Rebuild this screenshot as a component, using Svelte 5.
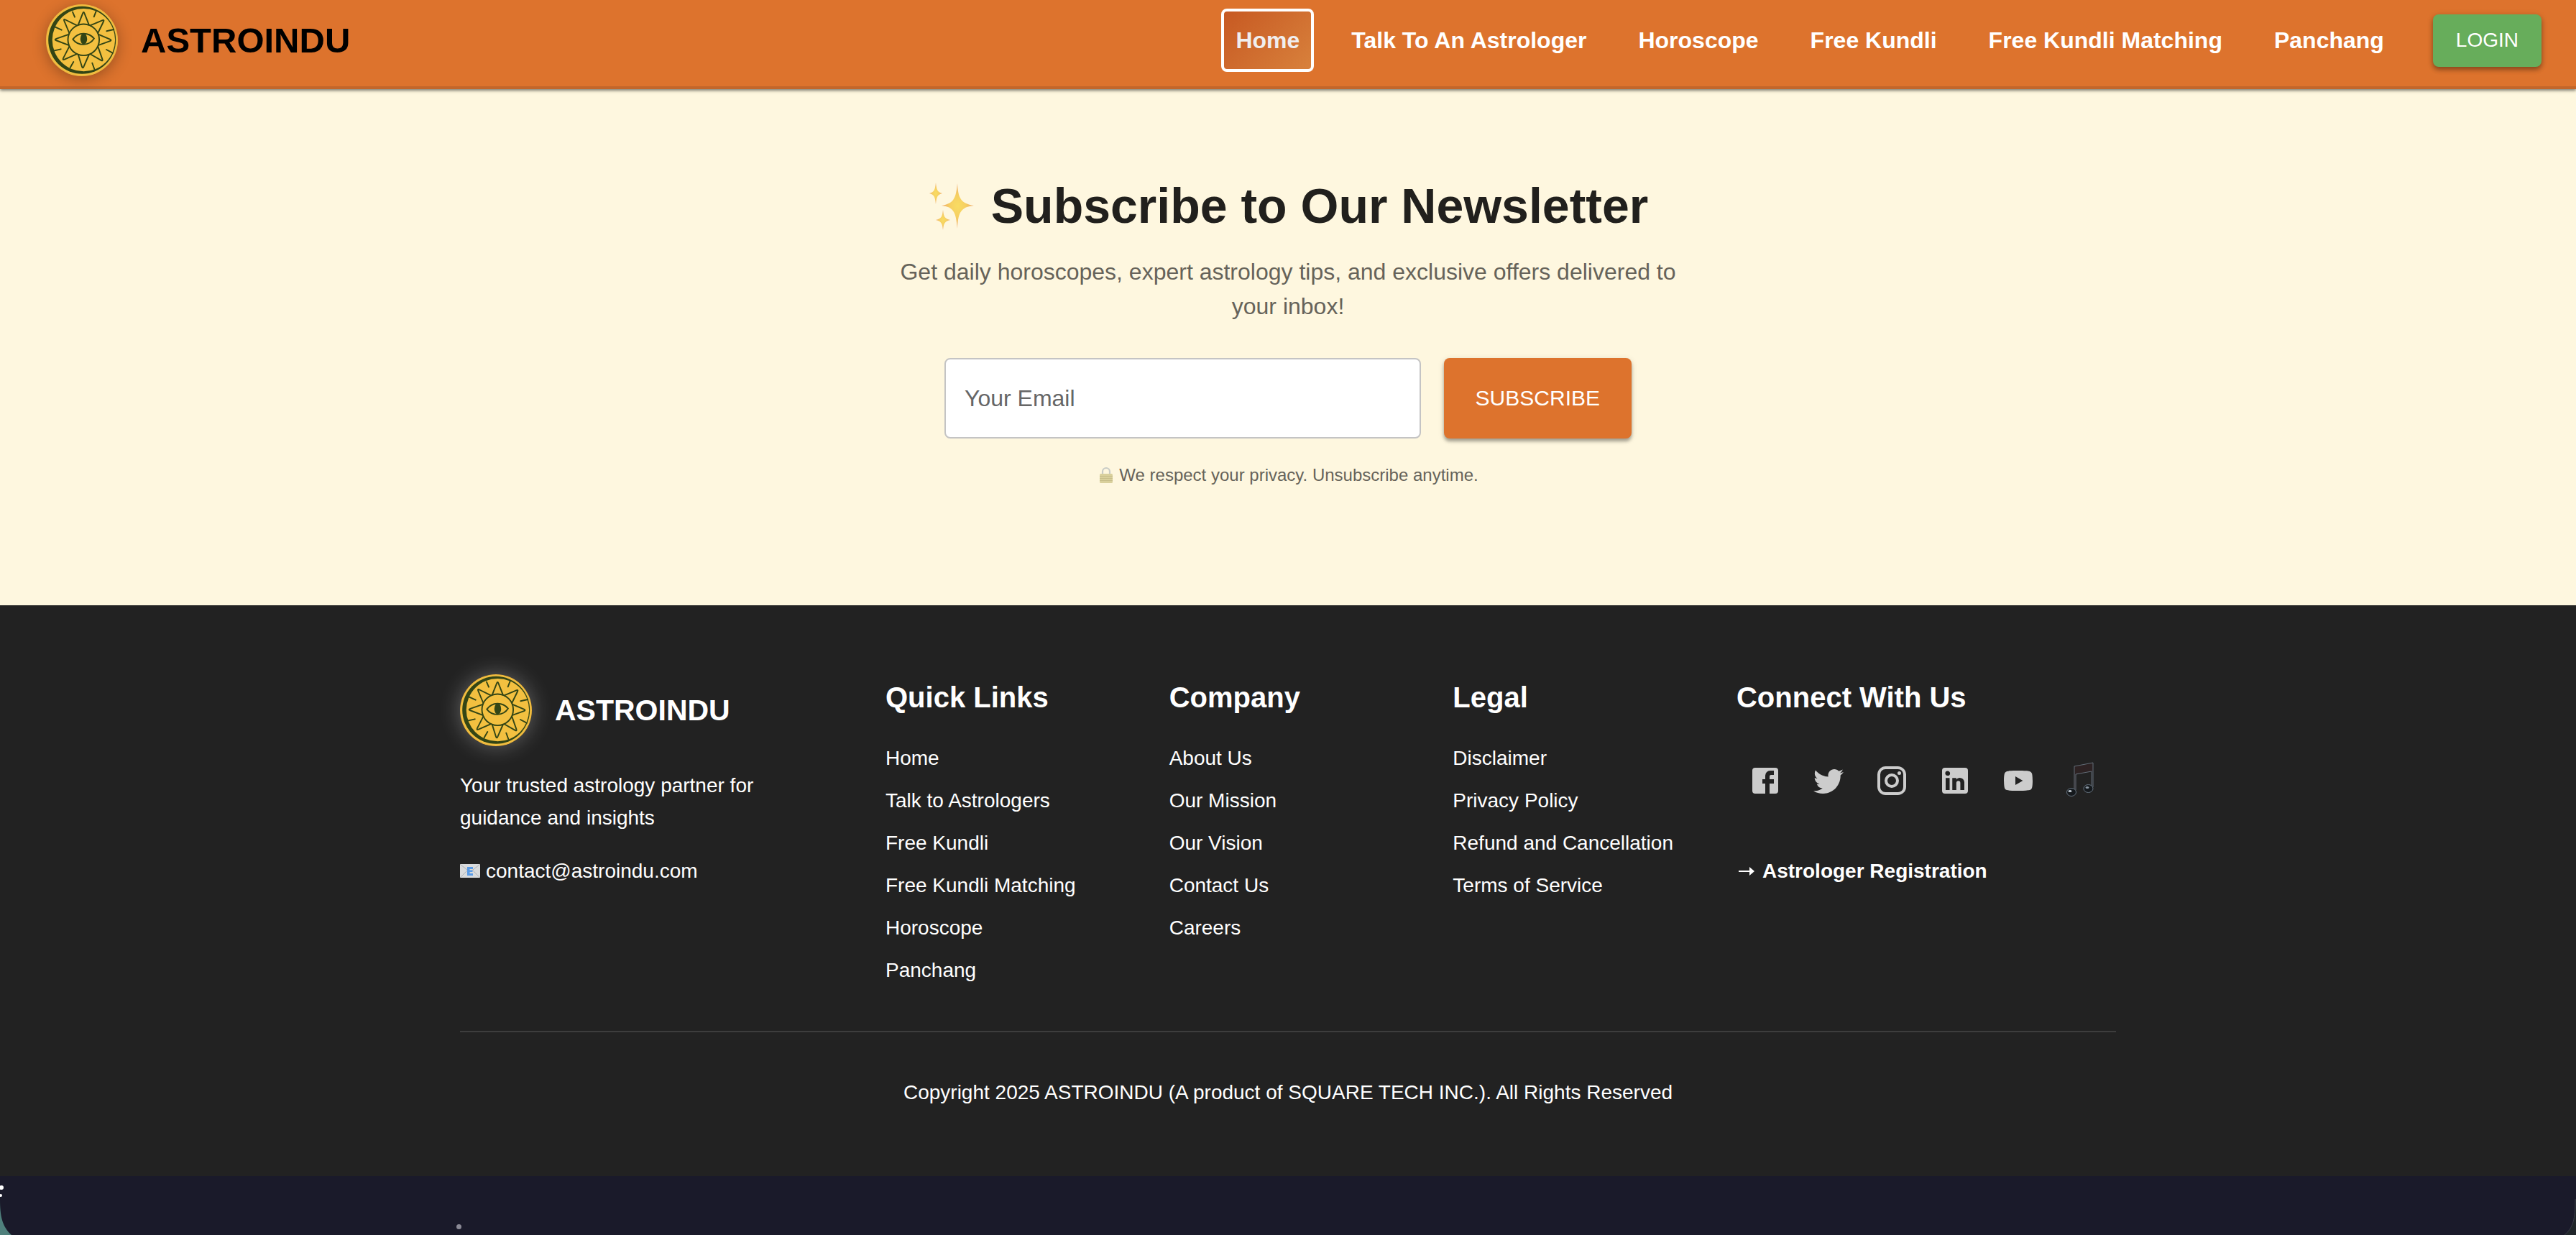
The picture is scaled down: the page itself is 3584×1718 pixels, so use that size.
<script lang="ts">
  interface Point {
    x: number;
    y: number;
  }

  let email = $state('');

  const navItems = ['Home', 'Talk To An Astrologer', 'Horoscope', 'Free Kundli', 'Free Kundli Matching', 'Panchang'];
  let active = $state('Home');

  const linkGroups = [
    {
      title: 'Quick Links',
      links: ['Home', 'Talk to Astrologers', 'Free Kundli', 'Free Kundli Matching', 'Horoscope', 'Panchang']
    },
    { title: 'Company', links: ['About Us', 'Our Mission', 'Our Vision', 'Contact Us', 'Careers'] },
    { title: 'Legal', links: ['Disclaimer', 'Privacy Policy', 'Refund and Cancellation', 'Terms of Service'] }
  ];

  const socials = [
    {
      name: 'Facebook',
      path: 'M5 3h14a2 2 0 0 1 2 2v14a2 2 0 0 1-2 2H5a2 2 0 0 1-2-2V5a2 2 0 0 1 2-2m13 2h-2.5A3.5 3.5 0 0 0 12 8.5V11h-2v3h2v7h3v-7h3v-3h-3V9a1 1 0 0 1 1-1h2V5z'
    },
    {
      name: 'Twitter',
      path: 'M22.46 6c-.77.35-1.6.58-2.46.69.88-.53 1.56-1.37 1.88-2.38-.83.5-1.75.85-2.72 1.05C18.37 4.5 17.26 4 16 4c-2.35 0-4.27 1.92-4.27 4.29 0 .34.04.67.11.98C8.28 9.09 5.11 7.38 3 4.79c-.37.63-.58 1.37-.58 2.15 0 1.49.75 2.81 1.91 3.56-.71 0-1.37-.2-1.95-.5v.03c0 2.08 1.48 3.82 3.44 4.21a4.22 4.22 0 0 1-1.93.07 4.28 4.28 0 0 0 4 2.98 8.521 8.521 0 0 1-5.33 1.84c-.34 0-.68-.02-1.02-.06C3.44 20.29 5.7 21 8.12 21 16 21 20.33 14.46 20.33 8.79c0-.19 0-.37-.01-.56.84-.6 1.56-1.36 2.14-2.23z'
    },
    {
      name: 'Instagram',
      path: 'M7.8 2h8.4C19.4 2 22 4.6 22 7.8v8.4a5.8 5.8 0 0 1-5.8 5.8H7.8C4.6 22 2 19.4 2 16.2V7.8A5.8 5.8 0 0 1 7.8 2m-.2 2A3.6 3.6 0 0 0 4 7.6v8.8C4 18.39 5.61 20 7.6 20h8.8a3.6 3.6 0 0 0 3.6-3.6V7.6C20 5.61 18.39 4 16.4 4H7.6m9.65 1.5a1.25 1.25 0 0 1 1.25 1.25A1.25 1.25 0 0 1 17.25 8 1.25 1.25 0 0 1 16 6.75a1.25 1.25 0 0 1 1.25-1.25M12 7a5 5 0 0 1 5 5 5 5 0 0 1-5 5 5 5 0 0 1-5-5 5 5 0 0 1 5-5m0 2a3 3 0 0 0-3 3 3 3 0 0 0 3 3 3 3 0 0 0 3-3 3 3 0 0 0-3-3z'
    },
    {
      name: 'LinkedIn',
      path: 'M19 3a2 2 0 0 1 2 2v14a2 2 0 0 1-2 2H5a2 2 0 0 1-2-2V5a2 2 0 0 1 2-2h14m-.5 15.5v-5.3a3.26 3.26 0 0 0-3.26-3.26c-.85 0-1.84.52-2.32 1.3v-1.11h-2.79v8.37h2.79v-4.93c0-.77.62-1.4 1.39-1.4a1.4 1.4 0 0 1 1.4 1.4v4.93h2.79M6.88 8.56a1.68 1.68 0 0 0 1.68-1.68c0-.93-.75-1.69-1.68-1.69a1.69 1.69 0 0 0-1.69 1.69c0 .93.76 1.68 1.69 1.68m1.39 9.94v-8.37H5.5v8.37h2.77z'
    },
    {
      name: 'YouTube',
      path: 'M10 15l5.19-3L10 9v6m11.56-7.83c.13.47.22 1.1.28 1.9.07.8.1 1.49.1 2.09L22 12c0 2.19-.16 3.8-.44 4.83-.25.9-.83 1.48-1.73 1.73-.47.13-1.33.22-2.65.28-1.3.07-2.49.1-3.59.1L12 19c-4.19 0-6.8-.16-7.83-.44-.9-.25-1.48-.83-1.73-1.73-.13-.47-.22-1.1-.28-1.9-.07-.8-.1-1.49-.1-2.09L2 12c0-2.19.16-3.8.44-4.83.25-.9.83-1.48 1.73-1.73.47-.13 1.33-.22 2.65-.28 1.3-.07 2.49-.1 3.59-.1L12 5c4.19 0 6.8.16 7.83.44.9.25 1.48.83 1.73 1.73z'
    }
  ];

  // sun rays: two points on the inner circle and the tip
  const rays: [Point, Point, Point][] = [
    [{ x: 44.8, y: 28.6 }, { x: 52.3, y: 9.5 }, { x: 59.8, y: 28.6 }],
    [{ x: 61.6, y: 29.4 }, { x: 81.5, y: 21 }, { x: 72.2, y: 40 }],
    [{ x: 73, y: 41.8 }, { x: 92, y: 50 }, { x: 73, y: 56.8 }],
    [{ x: 72.2, y: 58.6 }, { x: 79.5, y: 79.5 }, { x: 61.6, y: 69.2 }],
    [{ x: 59.8, y: 70 }, { x: 51, y: 90 }, { x: 44.8, y: 70 }],
    [{ x: 43, y: 69.2 }, { x: 22.5, y: 78 }, { x: 32.4, y: 58.6 }],
    [{ x: 31.6, y: 56.8 }, { x: 11, y: 49 }, { x: 31.6, y: 41.8 }],
    [{ x: 32.4, y: 40 }, { x: 24, y: 20 }, { x: 43, y: 29.4 }]
  ];

  function mix(a: Point, b: Point, t: number) {
    return `${a.x + (b.x - a.x) * t} ${a.y + (b.y - a.y) * t}`;
  }

  // rounded tip
  function rayPath([a, tip, b]: [Point, Point, Point]) {
    return `M${a.x} ${a.y}L${mix(a, tip, 0.84)}Q${tip.x} ${tip.y} ${mix(b, tip, 0.84)}L${b.x} ${b.y}`;
  }
</script>

{#snippet sunLogo()}
  <svg viewBox="0 0 100 100" aria-hidden="true">
    <circle cx="50" cy="50" r="50" fill="#edb83f" />
    <circle cx="50" cy="50" r="48.5" fill="#f3c040" />
    <circle cx="50.2" cy="49.8" r="47" fill="#334515" />
    <circle cx="52.4" cy="49.6" r="43.7" fill="#f3c040" />
    <g fill="none" stroke="#334515" stroke-width="1.9" stroke-linecap="round" stroke-linejoin="round">
      {#each rays as ray}
        <path d={rayPath(ray)} />
      {/each}
      <circle cx="52.3" cy="49.3" r="21.8" />
      <path d="M37.3 48.6C45 38.3 59 38.3 67 47.6C60 58.5 45 58.5 37.3 48.6Z" />
      <path d="M37 10.7L40 17.7M69.7 9.7L66.7 17.3M12.3 31.3L21.7 35.7M94.3 35L84.3 37.3M10.7 64.7L20.7 62.3M92.7 67.7L84 63M33.7 88L38.3 80M67.3 90L64.3 81.7" />
    </g>
    <ellipse cx="52.5" cy="48.2" rx="4.7" ry="7.6" fill="#334515" />
  </svg>
{/snippet}

<div class="page">
  <header class="navbar">
    <a class="brand" href="#home">
      <span class="logo">{@render sunLogo()}</span>
      <span class="brand-name">ASTROINDU</span>
    </a>
    <nav>
      {#each navItems as item}
        <a href="#nav" class="nav-link" class:active={active === item} onclick={() => (active = item)}>{item}</a>
      {/each}
    </nav>
    <button class="login" type="button">LOGIN</button>
  </header>

  <main class="newsletter">
    <h1>
      <svg class="sparkles" viewBox="0 0 68 68" aria-hidden="true">
        <defs>
          <radialGradient id="spark">
            <stop offset="0" stop-color="#f8dc62" />
            <stop offset="0.5" stop-color="#f6cf62" />
            <stop offset="1" stop-color="#eda46a" />
          </radialGradient>
        </defs>
        <g fill="url(#spark)">
          <path d="M41 3C42 24 46 31 64 34C46 36 42 43 41 66C39 43 36 36 19 34C36 31 39 24 41 3Z" />
          <path d="M11 2C12 12 13 15 20 17C13 19 12 22 11 32C10 22 9 19 2 17C9 15 10 12 11 2Z" />
          <path d="M21 40C22 49 23 52 31 54C23 56 22 59 21 68C20 59 19 56 11 54C19 52 20 49 21 40Z" />
        </g>
      </svg>
      Subscribe to Our Newsletter
    </h1>
    <p class="lead">Get daily horoscopes, expert astrology tips, and exclusive offers delivered to your inbox!</p>
    <form onsubmit={(e) => e.preventDefault()}>
      <input type="email" aria-label="Your Email" placeholder="Your Email" bind:value={email} />
      <button class="subscribe" type="submit">SUBSCRIBE</button>
    </form>
    <p class="privacy">
      <svg class="lock" viewBox="0 0 20 24" aria-hidden="true">
        <path d="M5 11V7a5 5 0 0 1 10 0v4" fill="none" stroke="#c9ccc6" stroke-width="2.2" />
        <rect x="1" y="10" width="18" height="13" rx="1.5" fill="#d9d09c" />
        <path d="M1 13.5h18M1 16.5h18M1 19.5h18" stroke="#c6bd8a" stroke-width="1" />
      </svg>
      We respect your privacy. Unsubscribe anytime.
    </p>
  </main>

  <footer>
    <div class="footer-inner">
      <div class="columns">
        <section class="about">
          <div class="footer-brand">
            <span class="logo glow">{@render sunLogo()}</span>
            <span class="footer-name">ASTROINDU</span>
          </div>
          <p class="tagline">Your trusted astrology partner for guidance and insights</p>
          <a class="contact" href="mailto:contact@astroindu.com">
            <svg class="mail" viewBox="0 0 28 20" aria-hidden="true">
              <rect x="0" y="0" width="28" height="19" rx="1" fill="#d9dbdd" />
              <path d="M1 1l13 10L27 1M1 18l9-9M27 18l-9-9" fill="none" stroke="#aeb2b6" stroke-width="1" />
              <path d="M10 4h8v3h-4.500v1.500h4v2.500h-4V13H18v3h-8z" fill="#5a9be6" />
            </svg>
            contact@astroindu.com
          </a>
        </section>

        {#each linkGroups as group}
          <section>
            <h2>{group.title}</h2>
            <ul>
              {#each group.links as link}
                <li><a href="#link">{link}</a></li>
              {/each}
            </ul>
          </section>
        {/each}

        <section>
          <h2>Connect With Us</h2>
          <div class="socials">
            {#each socials as social}
              <a href="#social" aria-label={social.name}>
                <svg viewBox="0 0 24 24"><path d={social.path} /></svg>
              </a>
            {/each}
            <a href="#social" aria-label="TikTok">
              <svg class="music" viewBox="0 0 48 48">
                <path d="M14 4L40 -1V11L16 15V38H14Z" fill="#2d2223" />
                <path d="M14 38V4L40 -1V33M16 37V15L38 11V33" fill="none" stroke="#626d78" stroke-width="1" />
                <ellipse cx="10" cy="40" rx="6.5" ry="5.5" fill="#15191d" stroke="#65727e" />
                <ellipse cx="33.500" cy="35" rx="6.5" ry="5.5" fill="#15191d" stroke="#65727e" />
                <ellipse cx="8" cy="38.500" rx="2.5" ry="1.5" fill="#c3ccd4" />
                <ellipse cx="32" cy="33.500" rx="2.5" ry="1.5" fill="#8c98a3" />
              </svg>
            </a>
          </div>
          <a class="register" href="#register">
            <svg class="arrow" viewBox="0 0 28 16" aria-hidden="true">
              <path d="M3 7h15V2l7 6-7 6V9H3z" fill="#fff" />
            </svg>
            Astrologer Registration
          </a>
        </section>
      </div>
      <p class="copyright">Copyright 2025 ASTROINDU (A product of SQUARE TECH INC.). All Rights Reserved</p>
    </div>
  </footer>

  <div class="night-sky">
    <span class="star big"></span>
    <span class="star small"></span>
    <span class="star dim"></span>
    <svg class="corner left" viewBox="0 0 16 50" aria-hidden="true">
      <path d="M0 0C0 24 3 38 16 50H0Z" fill="#4f807c" />
    </svg>
    <svg class="corner right" viewBox="0 0 16 50" aria-hidden="true">
      <path d="M16 0V50H0C12 40 15 28 15 0Z" fill="#20262a" />
      <path d="M0 50C12 40 15 28 15 0" fill="none" stroke="#3a3b4a" stroke-width="1" />
    </svg>
  </div>
</div>

<style>
  :global(body) {
    background: #1a1a2a;
  }

  .page {
    display: flex;
    flex-direction: column;
    min-height: 100vh;
    font-family: Helvetica, 'Liberation Sans', Arial, sans-serif;
    color: #fff;
  }

  a {
    color: inherit;
    text-decoration: none;
  }

  h1, h2, p, ul {
    margin: 0;
    padding: 0;
  }

  svg {
    display: block;
  }

  button {
    font-family: inherit;
    border: none;
    color: #fff;
    border-radius: 8px;
    cursor: pointer;
  }

  .navbar {
    display: flex;
    align-items: center;
    box-sizing: border-box;
    height: 124px;
    padding: 0 48px 8px 64px;
    background: #dd732d;
    border-bottom: 4px solid #c3662a;
    box-shadow: 0 2px 4px rgba(0, 0, 0, 0.5);
    z-index: 1;
  }

  .brand {
    display: flex;
    align-items: center;
    gap: 32px;
    margin-right: auto;
    color: #000;
  }

  .logo {
    width: 100px;
    height: 100px;
    border-radius: 50%;
    box-shadow: 0 4px 20px rgba(0, 0, 0, 0.3);
  }

  .brand-name {
    font-size: 49px;
    font-weight: bold;
  }

  nav {
    display: flex;
    gap: 32px;
    margin-right: 48px;
  }

  .nav-link {
    box-sizing: border-box;
    height: 88px;
    padding: 0 16px;
    border: 4px solid transparent;
    border-radius: 8px;
    font-size: 32px;
    font-weight: bold;
    line-height: 80px;
    white-space: nowrap;
  }

  .nav-link.active {
    color: #f0eeee;
    border-color: #fff;
    background: linear-gradient(135deg, #c75922, #d8813c) padding-box;
  }

  .login {
    height: 73px;
    padding: 0 32px;
    background: #67ad5b;
    font-size: 28px;
    box-shadow: 0 4px 6px rgba(0, 0, 0, 0.3), 0 2px 10px rgba(0, 0, 0, 0.15);
  }

  .newsletter {
    display: flex;
    flex-direction: column;
    align-items: center;
    padding: 120px 48px 160px;
    background: #fef7df;
    color: #66635a;
    text-align: center;
  }

  h1 {
    display: flex;
    align-items: center;
    gap: 20px;
    font-size: 68px;
    line-height: 84px;
    color: #21201d;
  }

  .sparkles {
    width: 68px;
    height: 68px;
  }

  .lead {
    max-width: 1104px;
    margin-top: 26px;
    font-size: 32px;
    line-height: 48px;
  }

  form {
    display: flex;
    gap: 32px;
    width: 956px;
    max-width: 100%;
    margin-top: 48px;
  }

  input {
    flex: 1;
    min-width: 0;
    height: 112px;
    box-sizing: border-box;
    padding: 0 26px;
    border: 2px solid #c4c4c4;
    border-radius: 8px;
    background: #fff;
    color: #222;
    font-family: inherit;
    font-size: 32px;
  }

  input::placeholder {
    color: #666;
    opacity: 1;
  }

  .subscribe {
    padding: 0 44px;
    background: #dd732d;
    font-size: 30px;
    box-shadow: 0 4px 4px rgba(0, 0, 0, 0.3), 0 2px 10px rgba(0, 0, 0, 0.12);
  }

  .privacy {
    display: flex;
    align-items: center;
    gap: 8px;
    margin-top: 31px;
    font-size: 24px;
    line-height: 40px;
    padding: 0 0 1px 2px;
  }

  .lock {
    width: 20px;
    height: 24px;
  }

  footer {
    padding: 96px 48px;
    background: #222;
  }

  .footer-inner {
    max-width: 2304px;
    margin: 0 auto;
  }

  .columns {
    display: grid;
    grid-template-columns: 3fr 2fr 2fr 2fr 3fr;
    margin-right: -64px;
    padding-bottom: 63px;
    font-size: 28px;
  }

  .columns section {
    min-width: 0;
    padding-right: 64px;
  }

  .footer-brand {
    display: flex;
    align-items: center;
    gap: 32px;
  }

  .logo.glow {
    box-shadow: 0 0 30px rgba(255, 255, 255, 0.3);
  }

  .footer-name {
    font-size: 41px;
    font-weight: bold;
  }

  .tagline {
    max-width: 460px;
    margin: 32px 0;
    line-height: 45px;
  }

  .contact {
    display: flex;
    align-items: center;
    gap: 8px;
    line-height: 40px;
  }

  .mail {
    width: 28px;
    height: 20px;
  }

  h2 {
    margin-bottom: 31px;
    font-size: 40px;
    line-height: 64px;
  }

  ul {
    display: grid;
    gap: 16px;
    list-style: none;
    line-height: 43px;
    white-space: nowrap;
  }

  .socials {
    display: flex;
    align-items: center;
    gap: 8px;
    height: 106px;
    margin-bottom: 53px;
  }

  .socials a {
    padding: 16px;
  }

  .socials svg {
    width: 48px;
    height: 48px;
    fill: #ccc;
    overflow: visible;
  }

  .register {
    display: flex;
    align-items: center;
    gap: 8px;
    font-weight: bold;
    line-height: 40px;
  }

  .arrow {
    width: 28px;
    height: 16px;
  }

  .copyright {
    padding-top: 64px;
    border-top: 2px solid #3d3d3d;
    font-size: 28px;
    line-height: 40px;
    text-align: center;
  }

  .night-sky {
    position: relative;
    flex: 1;
    min-height: 80px;
    overflow: hidden;
    background: #1a1a2a;
  }

  .star {
    position: absolute;
    border-radius: 50%;
    background: #fff;
  }

  .star.big {
    left: -1px;
    top: 13px;
    width: 6px;
    height: 6px;
  }

  .star.small {
    left: -1px;
    top: 25px;
    width: 4px;
    height: 4px;
  }

  .star.dim {
    left: 635px;
    top: 67px;
    width: 7px;
    height: 7px;
    background: #8b8a96;
  }

  .corner {
    position: absolute;
    bottom: 0;
    width: 16px;
    height: 50px;
  }

  .corner.left {
    left: 0;
  }

  .corner.right {
    right: 0;
  }
</style>
